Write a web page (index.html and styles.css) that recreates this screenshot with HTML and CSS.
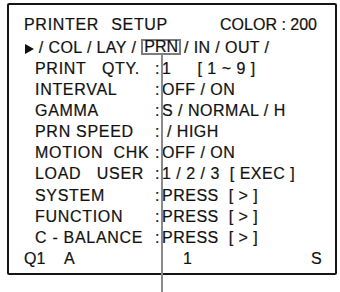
FILE: index.html
```html
<!DOCTYPE html>
<html lang="en">
<head>
  <meta charset="UTF-8">
  <title>Printer Setup</title>
  <link rel="stylesheet" href="styles.css">
</head>
<body>
  <div class="screen">
    <div class="title">
      <span>PRINTER<span class="setup">SETUP</span></span>
      <span>COLOR : 200</span>
    </div>

    <div class="tabs">
      <svg class="cursor" width="9" height="10" viewBox="0 0 9 10"><polygon points="0,0 9,5 0,10" fill="#111"/></svg> / COL / LAY /<span class="sel">PRN</span><span class="after">/ IN / OUT /</span>
    </div>

    <div class="row"><span class="label">PRINT&nbsp;&nbsp;&nbsp;QTY.</span><span>:</span><span class="value">1<span class="range">[ 1 ~ 9 ]</span></span></div>
    <div class="row"><span class="label">INTERVAL</span><span>:</span><span class="value">OFF / ON</span></div>
    <div class="row"><span class="label">GAMMA</span><span>:</span><span class="value">S / NORMAL / H</span></div>
    <div class="row"><span class="label">PRN SPEED</span><span>:</span><span class="value">&nbsp;/ HIGH</span></div>
    <div class="row"><span class="label">MOTION&nbsp;&nbsp;CHK</span><span>:</span><span class="value">OFF / ON</span></div>
    <div class="row"><span class="label">LOAD&nbsp;&nbsp;&nbsp;USER</span><span>:</span><span class="value">1 / 2 / 3&nbsp;&nbsp;[ EXEC ]</span></div>
    <div class="row"><span class="label">SYSTEM</span><span>:</span><span class="value">PRESS&nbsp;&nbsp;[ &gt; ]</span></div>
    <div class="row"><span class="label">FUNCTION</span><span>:</span><span class="value">PRESS&nbsp;&nbsp;[ &gt; ]</span></div>
    <div class="row"><span class="label">C - BALANCE</span><span>:</span><span class="value">PRESS&nbsp;&nbsp;[ &gt; ]</span></div>

    <div class="status">
      <span class="q">Q1</span>
      <span class="mode">A</span>
      <span class="num">1</span>
      <span>S</span>
    </div>
  </div>

  <!-- leader line from the PRN tab -->
  <div class="pointer"></div>
</body>
</html>
```

FILE: styles.css
```css
body {
  margin: 0;
  background: #fff;
  color: #111;
  font-family: "Liberation Sans", Arial, sans-serif;
  font-size: 16px;
  -webkit-text-stroke: 0.2px #111;
  position: relative;
  width: 340px;
  height: 292px;
  overflow: hidden;
}
.screen {
  box-sizing: border-box;
  width: 330px;
  height: 272px;
  margin: 3px 0 0 7px;
  border: 2px solid #151515;
  border-radius: 2px;
  padding: 8.5px 0 0 15px;
  line-height: 21.1px;
  white-space: nowrap;
}
.title {
  display: flex;
  justify-content: space-between;
  padding-right: 18px;
  margin-bottom: 2.3px;
}
.title > span:first-child {
  letter-spacing: 0.7px;
}
.setup {
  margin-left: 12px;
}
.tabs {
  letter-spacing: 0.4px;
}
.cursor {
  margin-left: 1px;
  vertical-align: -1px;
}
.sel {
  display: inline-block;
  line-height: 12.5px;
  height: 12.5px;
  padding: 0 1px;
  margin-left: 5px;
  border: 2px solid #7c7c7c;
  letter-spacing: 0;
  vertical-align: 1px;
}
.after {
  margin-left: 3px;
}
.row {
  display: grid;
  grid-template-columns: 120px 7px auto;
  margin-left: 11px;
}
.label {
  letter-spacing: 0.7px;
}
.value {
  letter-spacing: 0.5px;
}
.range {
  margin-left: 26px;
}
.status {
  display: flex;
}
.q {
  width: 40px;
}
.mode {
  width: 119px;
}
.num {
  width: 128px;
}
.pointer {
  position: absolute;
  left: 161px;
  top: 54px;
  width: 2px;
  height: 238px;
  background: #8a8a8a;
}
```
